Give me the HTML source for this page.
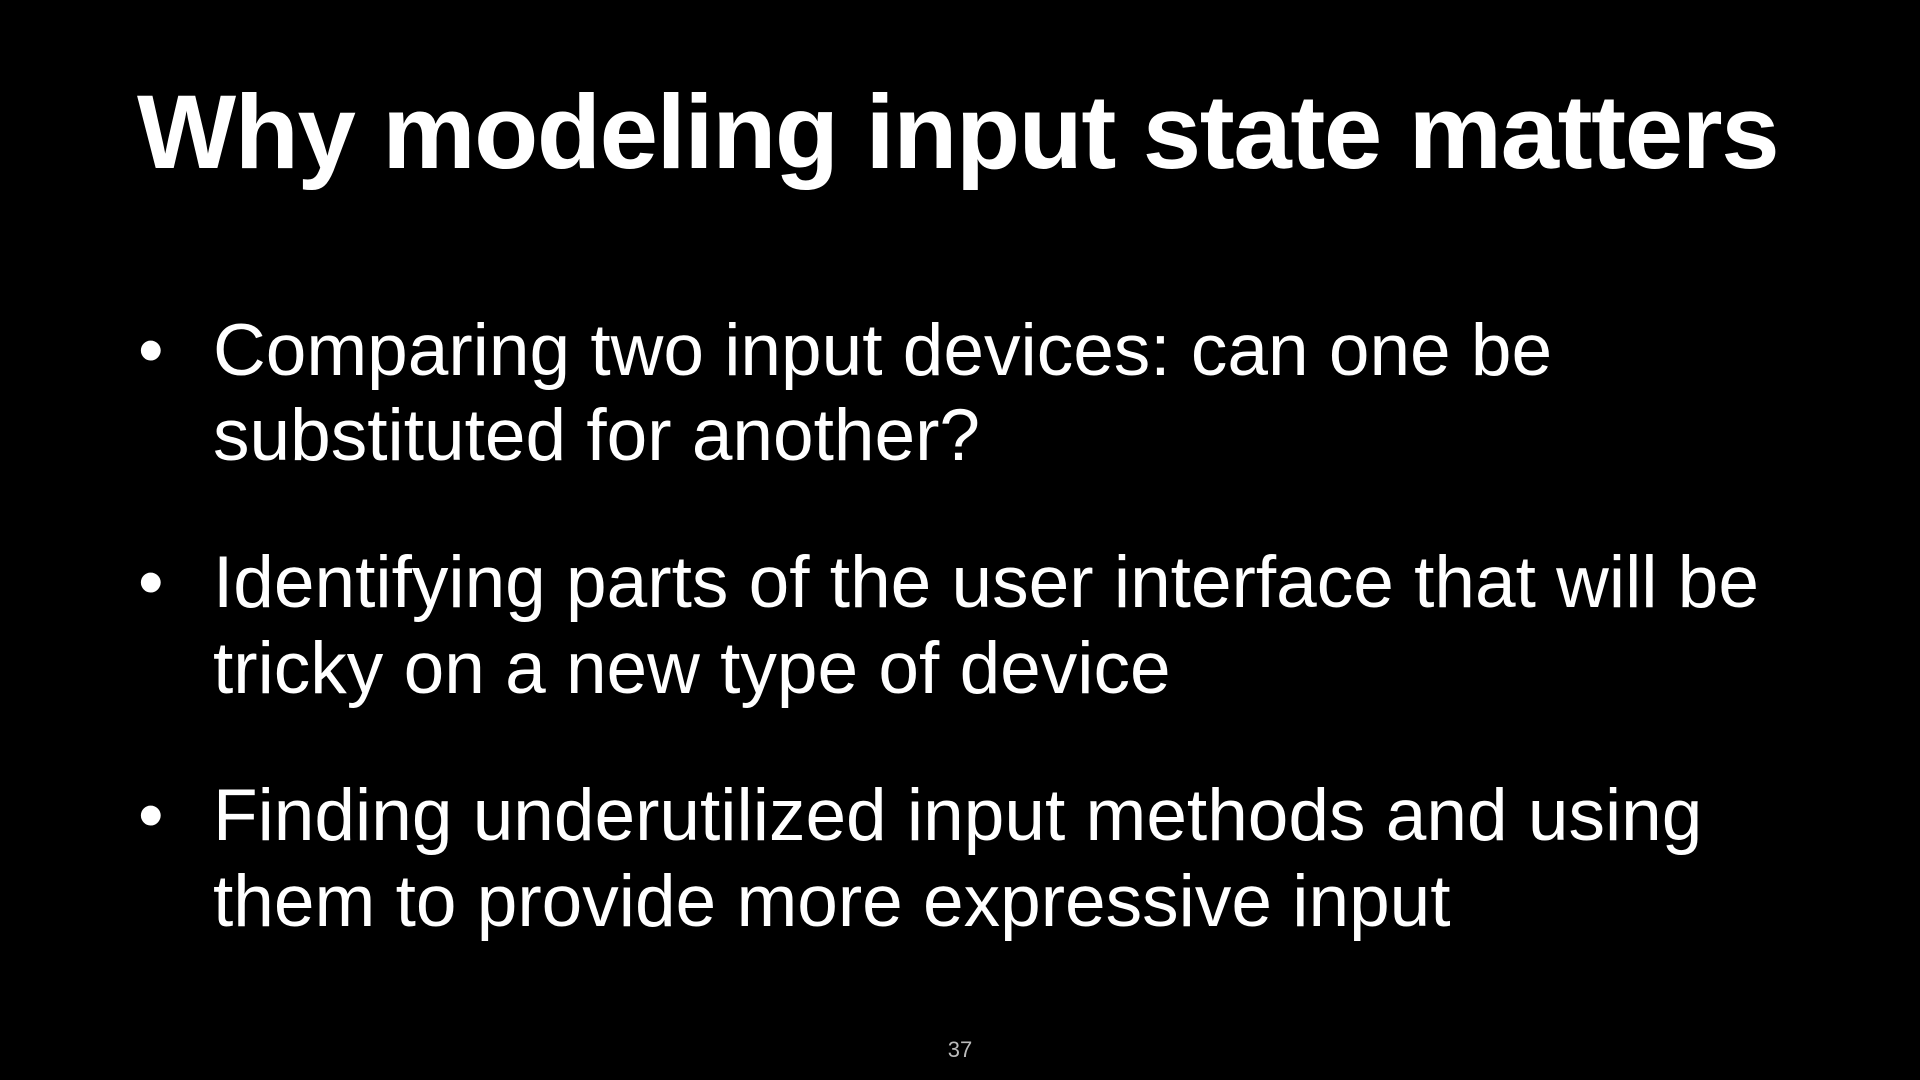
<!DOCTYPE html>
<html><head><meta charset="utf-8"><style>
html,body{margin:0;padding:0;background:#000;width:1920px;height:1080px;overflow:hidden}
body{position:relative;font-family:"Liberation Sans",Arial,sans-serif;color:#fff}
.t{position:absolute;left:137px;top:73px;font-size:105px;font-weight:bold;white-space:nowrap;letter-spacing:-1.4px}
.l{position:absolute;left:213px;font-size:73px;white-space:nowrap;line-height:1.149}
.b{position:absolute;left:138px;font-size:73px;line-height:1.149}
.n{position:absolute;left:0;width:1920px;text-align:center;top:1037px;font-size:22px;color:#bbb}
</style></head><body>
<div class="t">Why modeling input state matters</div>
<div class="b" style="top:309px">•</div>
<div class="l" style="top:309px">Comparing two input devices: can one be</div>
<div class="l" style="top:394px">substituted for another?</div>
<div class="b" style="top:541px">•</div>
<div class="l" style="top:541px">Identifying parts of the user interface that will be</div>
<div class="l" style="top:627px">tricky on a new type of device</div>
<div class="b" style="top:774px">•</div>
<div class="l" style="top:774px">Finding underutilized input methods and using</div>
<div class="l" style="top:860px">them to provide more expressive input</div>
<div class="n">37</div>
</body></html>
